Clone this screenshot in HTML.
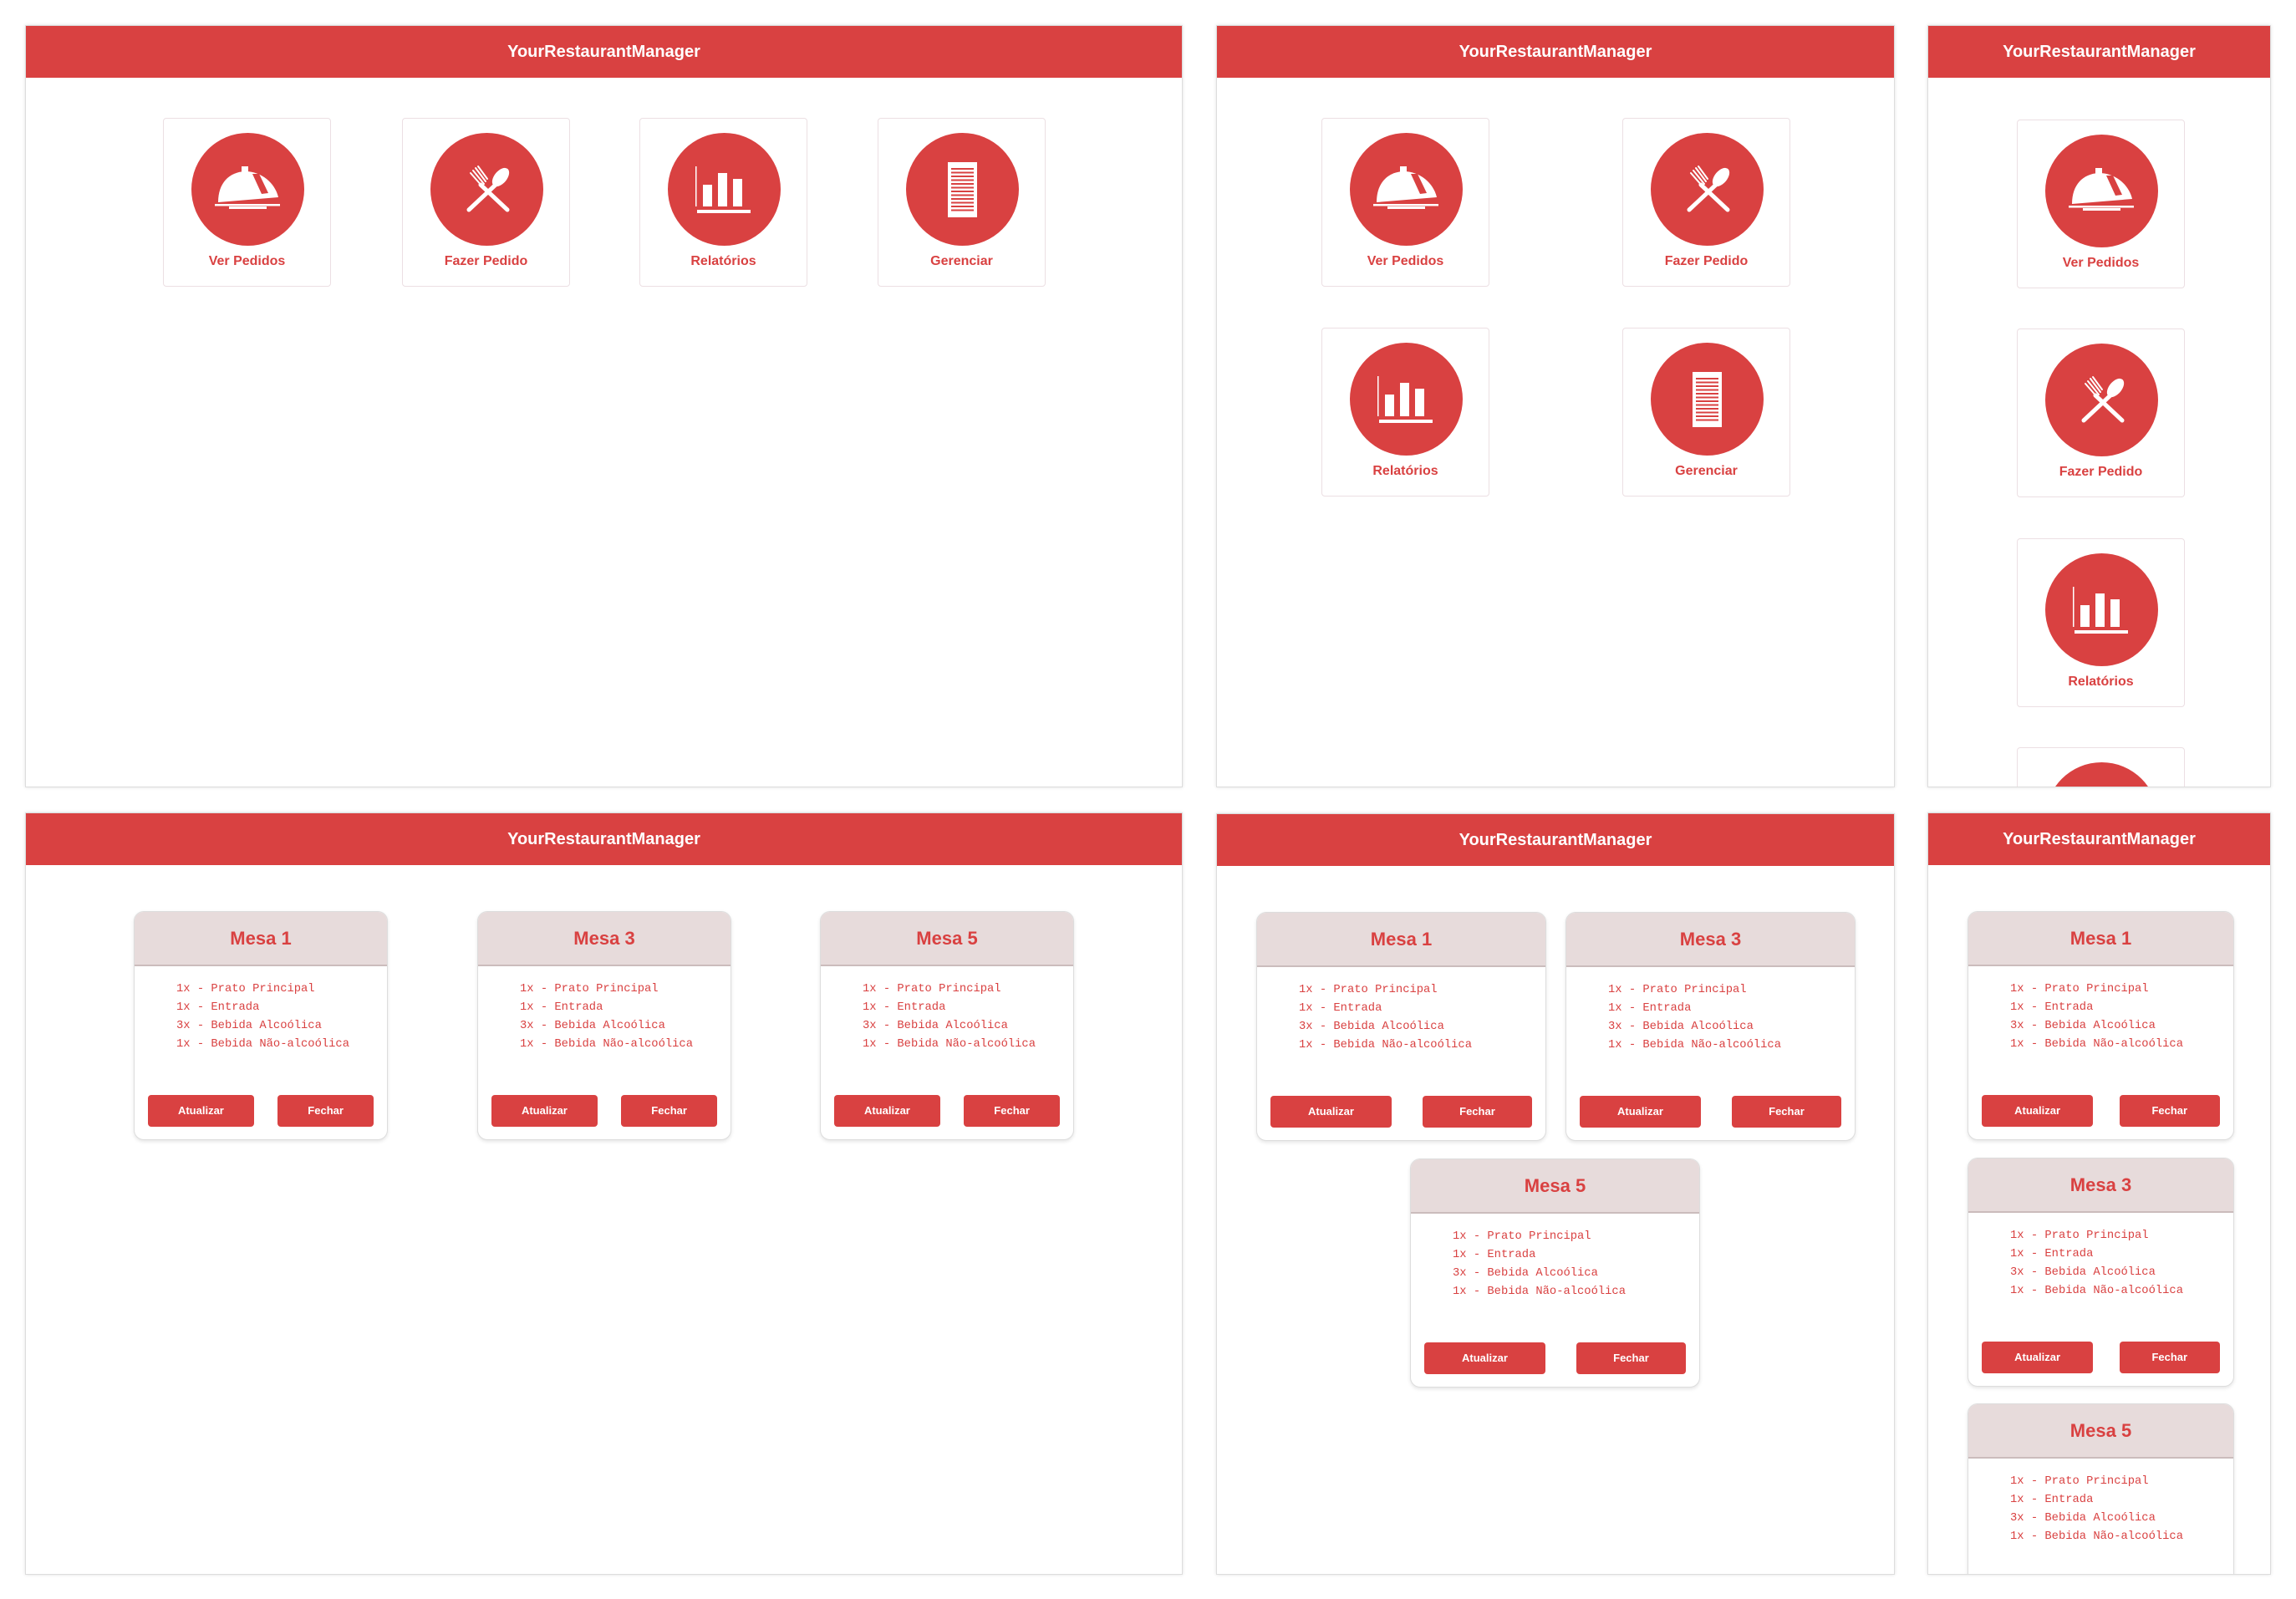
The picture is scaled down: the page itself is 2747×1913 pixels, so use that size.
<!DOCTYPE html>
<html><head><meta charset="utf-8"><style>
*{box-sizing:border-box;margin:0;padding:0}
body{width:2747px;height:1913px;background:#fff;position:relative;overflow:hidden;font-family:"Liberation Sans",sans-serif}
.p{position:absolute;background:#fff;border:1px solid #ddd;box-shadow:0 0 4px rgba(0,0,0,.12);overflow:hidden}
.h{position:absolute;left:0;right:0;top:0;height:62px;background:#d94141;color:#fff;font-weight:bold;font-size:20px;text-align:center;line-height:62px}
.c{position:absolute;width:201px;height:202px;border:1px solid #ecdfe3;border-radius:4px;background:#fff}
.c svg{position:absolute;left:33px;top:17px;width:135px;height:135px}
.c span{position:absolute;left:0;right:0;top:162px;text-align:center;color:#d94141;font-weight:bold;font-size:16px}
.m{position:absolute;height:274px;border:1px solid #ddd;border-radius:12px;background:#fff;box-shadow:0 2px 4px rgba(0,0,0,.1);overflow:hidden}
.mh{height:65px;background:#e7dbdb;border-bottom:2px solid #cbbcbc;color:#d94141;font-weight:bold;font-size:22px;text-align:center;line-height:63px}
.mi{position:absolute;left:50px;top:82px;font-family:"Liberation Mono",monospace;font-size:13.8px;line-height:22px;color:#d94141;white-space:pre}
.b{position:absolute;top:219px;height:38px;background:#d94141;color:#fff;border-radius:4px;font-weight:bold;font-size:13px;text-align:center;line-height:38px}
.b1{left:16px;width:42%}.b2{right:16px;width:38%}
</style></head><body>
<svg width="0" height="0" style="position:absolute">
<defs>
<symbol id="i1" viewBox="0 0 135 135"><circle cx="67.5" cy="67.5" r="67.5" fill="#d94141"/>
<path d="M32 83 C32 60 45 47 64 46 C84 46 100 60 104 77 Z" fill="#fff"/><path d="M73 49 L81 49 L92 72 L84 73 Z" fill="#d94141"/><rect x="60" y="40" width="8" height="7" fill="#fff"/><rect x="28" y="85" width="78" height="2.5" fill="#fff"/><rect x="45" y="88" width="45" height="3" fill="#fff"/></symbol>
<symbol id="i2" viewBox="0 0 135 135"><circle cx="67.5" cy="67.5" r="67.5" fill="#d94141"/>
<g stroke="#fff" stroke-linecap="round" fill="none"><line x1="60" y1="62" x2="92" y2="92" stroke-width="5"/><line x1="78" y1="62" x2="46" y2="92" stroke-width="5"/><path d="M48 48 L62 64 M51 45 L64 61 M54 42 L66 58 M57 40 L68 55" stroke-width="2"/></g>
<ellipse cx="84" cy="53" rx="7.5" ry="13" transform="rotate(40 84 53)" fill="#fff"/></symbol>
<symbol id="i3" viewBox="0 0 135 135"><circle cx="67.5" cy="67.5" r="67.5" fill="#d94141"/>
<rect x="33" y="40" width="1.5" height="48" fill="#fff"/><rect x="42" y="62" width="11" height="26" fill="#fff"/><rect x="60" y="48" width="11" height="40" fill="#fff"/><rect x="78" y="55" width="11" height="33" fill="#fff"/><rect x="35" y="92" width="64" height="4" fill="#fff"/></symbol>
<symbol id="i4" viewBox="0 0 135 135"><circle cx="67.5" cy="67.5" r="67.5" fill="#d94141"/>
<rect x="50" y="35" width="35" height="66" fill="#fff"/><path d="M54 43h27M54 47.5h27M54 52h27M54 56.5h27M54 61h27M54 65.5h27M54 70h27M54 74.5h27M54 79h27M54 83.5h27M54 88h27M54 92.5h27" stroke="#d94141" stroke-width="2"/></symbol>
</defs></svg>

<div class="p" style="left:30px;top:30px;width:1385px;height:912px"><div class="h">YourRestaurantManager</div>
<div class="c" style="left:164px;top:110px"><svg><use href="#i1"/></svg><span>Ver Pedidos</span></div>
<div class="c" style="left:450px;top:110px"><svg><use href="#i2"/></svg><span>Fazer Pedido</span></div>
<div class="c" style="left:734px;top:110px"><svg><use href="#i3"/></svg><span>Relatórios</span></div>
<div class="c" style="left:1019px;top:110px"><svg><use href="#i4"/></svg><span>Gerenciar</span></div>
</div>
<div class="p" style="left:1455px;top:30px;width:812px;height:912px"><div class="h">YourRestaurantManager</div>
<div class="c" style="left:125px;top:110px"><svg><use href="#i1"/></svg><span>Ver Pedidos</span></div>
<div class="c" style="left:485px;top:110px"><svg><use href="#i2"/></svg><span>Fazer Pedido</span></div>
<div class="c" style="left:125px;top:361px"><svg><use href="#i3"/></svg><span>Relatórios</span></div>
<div class="c" style="left:485px;top:361px"><svg><use href="#i4"/></svg><span>Gerenciar</span></div>
</div>
<div class="p" style="left:2306px;top:30px;width:411px;height:912px"><div class="h">YourRestaurantManager</div>
<div class="c" style="left:106px;top:112px"><svg><use href="#i1"/></svg><span>Ver Pedidos</span></div>
<div class="c" style="left:106px;top:362px"><svg><use href="#i2"/></svg><span>Fazer Pedido</span></div>
<div class="c" style="left:106px;top:613px"><svg><use href="#i3"/></svg><span>Relatórios</span></div>
<div class="c" style="left:106px;top:863px"><svg><use href="#i4"/></svg><span>Gerenciar</span></div>
</div>

<div class="p" style="left:30px;top:972px;width:1385px;height:912px"><div class="h">YourRestaurantManager</div>
<div class="m" style="left:129px;top:117px;width:304px"><div class="mh">Mesa 1</div><div class="mi">1x - Prato Principal
1x - Entrada
3x - Bebida Alcoólica
1x - Bebida Não-alcoólica</div><div class="b b1">Atualizar</div><div class="b b2">Fechar</div></div>
<div class="m" style="left:540px;top:117px;width:304px"><div class="mh">Mesa 3</div><div class="mi">1x - Prato Principal
1x - Entrada
3x - Bebida Alcoólica
1x - Bebida Não-alcoólica</div><div class="b b1">Atualizar</div><div class="b b2">Fechar</div></div>
<div class="m" style="left:950px;top:117px;width:304px"><div class="mh">Mesa 5</div><div class="mi">1x - Prato Principal
1x - Entrada
3x - Bebida Alcoólica
1x - Bebida Não-alcoólica</div><div class="b b1">Atualizar</div><div class="b b2">Fechar</div></div>
</div>
<div class="p" style="left:1455px;top:973px;width:812px;height:911px"><div class="h">YourRestaurantManager</div>
<div class="m" style="left:47px;top:117px;width:347px"><div class="mh">Mesa 1</div><div class="mi">1x - Prato Principal
1x - Entrada
3x - Bebida Alcoólica
1x - Bebida Não-alcoólica</div><div class="b b1">Atualizar</div><div class="b b2">Fechar</div></div>
<div class="m" style="left:417px;top:117px;width:347px"><div class="mh">Mesa 3</div><div class="mi">1x - Prato Principal
1x - Entrada
3x - Bebida Alcoólica
1x - Bebida Não-alcoólica</div><div class="b b1">Atualizar</div><div class="b b2">Fechar</div></div>
<div class="m" style="left:231px;top:412px;width:347px"><div class="mh">Mesa 5</div><div class="mi">1x - Prato Principal
1x - Entrada
3x - Bebida Alcoólica
1x - Bebida Não-alcoólica</div><div class="b b1">Atualizar</div><div class="b b2">Fechar</div></div>
</div>
<div class="p" style="left:2306px;top:972px;width:411px;height:912px"><div class="h">YourRestaurantManager</div>
<div class="m" style="left:47px;top:117px;width:319px"><div class="mh">Mesa 1</div><div class="mi">1x - Prato Principal
1x - Entrada
3x - Bebida Alcoólica
1x - Bebida Não-alcoólica</div><div class="b b1">Atualizar</div><div class="b b2">Fechar</div></div>
<div class="m" style="left:47px;top:412px;width:319px"><div class="mh">Mesa 3</div><div class="mi">1x - Prato Principal
1x - Entrada
3x - Bebida Alcoólica
1x - Bebida Não-alcoólica</div><div class="b b1">Atualizar</div><div class="b b2">Fechar</div></div>
<div class="m" style="left:47px;top:706px;width:319px"><div class="mh">Mesa 5</div><div class="mi">1x - Prato Principal
1x - Entrada
3x - Bebida Alcoólica
1x - Bebida Não-alcoólica</div><div class="b b1">Atualizar</div><div class="b b2">Fechar</div></div>
</div>
</body></html>
